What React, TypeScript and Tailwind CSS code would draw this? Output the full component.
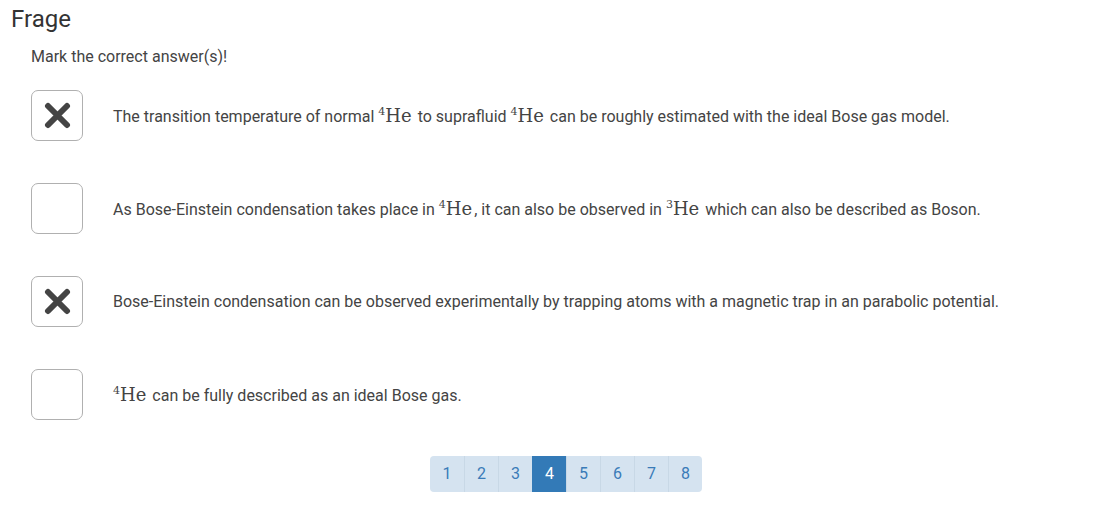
import React from 'react';

function He({ n }: { n: string }) {
  return (
    <span className="mr-[2px] whitespace-nowrap" style={{ fontFamily: '"DejaVu Serif", "Liberation Serif", serif' }}>
      <sup className="text-[11px] top-[-7px]">{n}</sup>
      <span className="text-[18px]">He</span>
    </span>
  );
}

function CheckBox({ checked }: { checked: boolean }) {
  return (
    <div className="w-[52px] h-[51px] shrink-0 rounded-[7px] border border-[#b0b0b0] bg-white flex items-center justify-center">
      {checked && (
        <svg width="27" height="27" viewBox="0 0 27 27">
          <path d="M4 4 L23 23 M23 4 L4 23" stroke="#444" strokeWidth="6" strokeLinecap="round" />
        </svg>
      )}
    </div>
  );
}

const answers: { checked: boolean; text: React.ReactNode }[] = [
  {
    checked: true,
    text: (
      <>
        The transition temperature of normal <He n="4" /> to suprafluid <He n="4" /> can be roughly estimated with the ideal Bose gas model.
      </>
    ),
  },
  {
    checked: false,
    text: (
      <>
        As Bose-Einstein condensation takes place in <He n="4" />, it can also be observed in <He n="3" /> which can also be described as Boson.
      </>
    ),
  },
  {
    checked: true,
    text: <>Bose-Einstein condensation can be observed experimentally by trapping atoms with a magnetic trap in an parabolic potential.</>,
  },
  {
    checked: false,
    text: (
      <>
        <He n="4" /> can be fully described as an ideal Bose gas.
      </>
    ),
  },
];

export default function App() {
  return (
    <div className="w-[1110px] h-[514px] bg-white text-[#333] pt-[5px]" style={{ fontFamily: 'Roboto, "Liberation Sans", sans-serif' }}>
      <h1 className="pl-[11px] text-[24px] leading-[28px] text-[#333]">Frage</h1>
      <div className="pl-[31px] pr-[9px]">
        <p className="mt-[14px] text-[16px] leading-[20px] text-[#444]">Mark the correct answer(s)!</p>
        <div className="mt-[23px] flex flex-col gap-[42px]">
          {answers.map((a, i) => (
            <div key={i} className="flex items-center gap-[30px] h-[51px]">
              <CheckBox checked={a.checked} />
              <div className="text-[16px] text-[#444]">{a.text}</div>
            </div>
          ))}
        </div>
        <div className="mt-[36px] flex justify-center">
          <div className="flex rounded-[4px] overflow-hidden bg-[#d5e3f0]">
            {[1, 2, 3, 4, 5, 6, 7, 8].map((n) => (
              <div
                key={n}
                className={
                  'w-[34px] h-[36px] flex items-center justify-center text-[16px] border-l first:border-l-0 ' +
                  (n === 4 ? 'bg-[#337ab7] text-white border-[#337ab7]' : 'text-[#3a7bb8] border-[#c8d8e6]')
                }
              >
                {n}
              </div>
            ))}
          </div>
        </div>
      </div>
    </div>
  );
}
